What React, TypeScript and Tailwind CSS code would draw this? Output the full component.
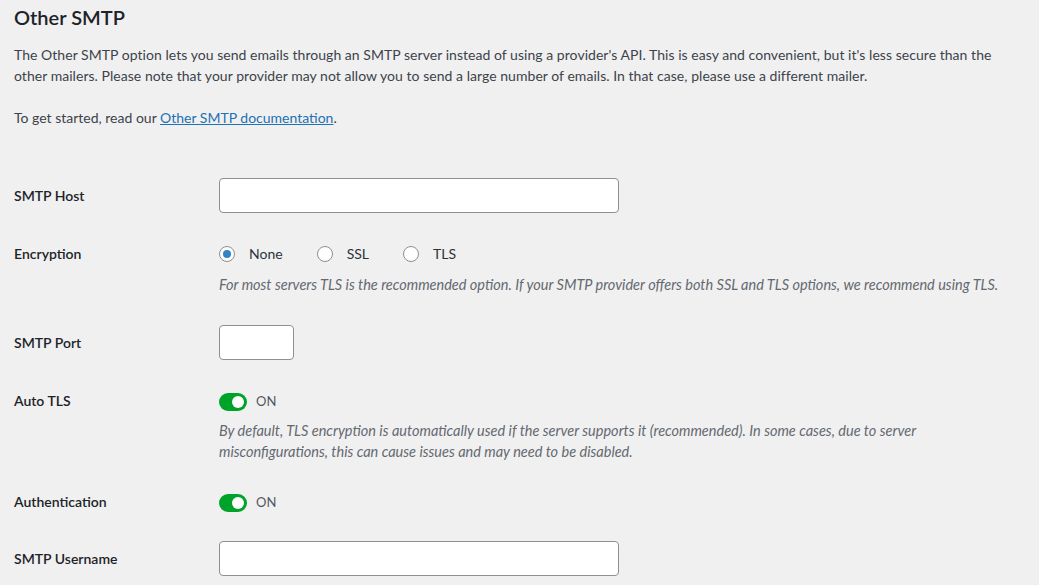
import React from "react";

const font = { fontFamily: "Lato, 'Noto Sans', sans-serif" };

function Label({ children, className = "" }: { children: React.ReactNode; className?: string }) {
  return (
    <div className={`w-[205px] shrink-0 text-[14px] font-semibold text-[#1d2327] ${className}`}>{children}</div>
  );
}

function Radio({ checked, label }: { checked?: boolean; label: string }) {
  return (
    <label className="flex items-center">
      <span className="flex h-4 w-4 items-center justify-center rounded-full border border-[#8c8f94] bg-white">
        {checked && <span className="h-2 w-2 rounded-full bg-[#3582c4]" />}
      </span>
      <span className="ml-[14px] text-[14px] text-[#2c3338]">{label}</span>
    </label>
  );
}

function Toggle() {
  return (
    <div className="flex h-[21px] items-center">
      <span className="flex h-[18px] w-[28px] items-center justify-end rounded-full bg-[#00a32a] pr-[3px]">
        <span className="h-[12px] w-[12px] rounded-full bg-white" />
      </span>
      <span className="ml-[9px] text-[13px] text-[#50575e]">ON</span>
    </div>
  );
}

export default function App() {
  return (
    <div className="min-h-[585px] w-full bg-[#f0f0f1] px-[14px] text-[#3c434a]" style={font}>
      <h2 className="pt-[4px] text-[20px] font-semibold leading-[26px] text-[#1d2327]">Other SMTP</h2>
      <p className="mt-[14px] text-[14px] leading-[21px] tracking-[0.04px]">
        The Other SMTP option lets you send emails through an SMTP server instead of using a provider's API. This is easy and convenient, but it's less secure than the
        <br />
        other mailers. Please note that your provider may not allow you to send a large number of emails. In that case, please use a different mailer.
      </p>
      <p className="mt-[21px] text-[14px] leading-[21px]">
        To get started, read our{" "}
        <a className="text-[#2271b1] underline" href="#">
          Other SMTP documentation
        </a>
        .
      </p>

      <div className="mt-[50px] flex items-center">
        <Label>SMTP Host</Label>
        <div className="h-[35px] w-[400px] rounded-[4px] border border-[#8c8f94] bg-white" />
      </div>

      <div className="mt-[30px] flex items-start">
        <Label className="leading-[21px]">Encryption</Label>
        <div>
          <div className="flex h-[21px] items-center gap-[34px]">
            <Radio checked label="None" />
            <Radio label="SSL" />
            <Radio label="TLS" />
          </div>
          <p className="mt-[10px] text-[14.5px] italic leading-[21px] text-[#646970]">
            For most servers TLS is the recommended option. If your SMTP provider offers both SSL and TLS options, we recommend using TLS.
          </p>
        </div>
      </div>

      <div className="mt-[30px] flex items-center">
        <Label>SMTP Port</Label>
        <div className="h-[35px] w-[75px] rounded-[4px] border border-[#8c8f94] bg-white" />
      </div>

      <div className="mt-[30px] flex items-start">
        <Label className="leading-[21px]">Auto TLS</Label>
        <div className="pt-[1px]">
          <Toggle />
          <p className="mt-[8px] text-[14.5px] italic leading-[21px] text-[#646970]">
            By default, TLS encryption is automatically used if the server supports it (recommended). In some cases, due to server
            <br />
            misconfigurations, this can cause issues and may need to be disabled.
          </p>
        </div>
      </div>

      <div className="mt-[29px] flex items-start">
        <Label className="leading-[21px]">Authentication</Label>
        <div className="pt-[1px]">
          <Toggle />
        </div>
      </div>

      <div className="mt-[28px] flex items-center">
        <Label>SMTP Username</Label>
        <div className="h-[35px] w-[400px] rounded-[4px] border border-[#8c8f94] bg-white" />
      </div>
    </div>
  );
}
